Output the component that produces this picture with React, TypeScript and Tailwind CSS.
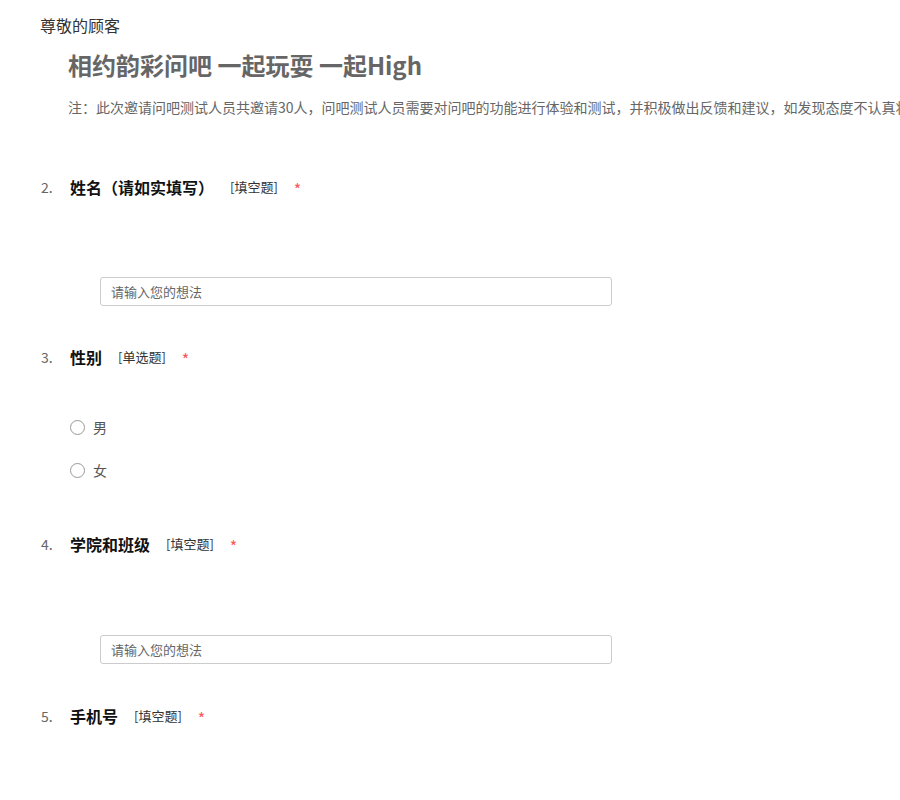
import React from 'react';

const font = { fontFamily: '"Noto Sans CJK SC", "Noto Sans", sans-serif' };

type QProps = { no: number; title: string; kind: string; className?: string };

const QuestionHead: React.FC<QProps> = ({ no, title, kind, className = '' }) => (
  <div className={`flex items-center h-[24px] leading-[24px] ${className}`}>
    <span className="w-[30px] text-[14px] text-[#666] pl-[1px]">{no}.</span>
    <span className="text-[16px] font-bold text-[#111]">{title}</span>
    <span className="ml-[16px] text-[13px] text-[#333]">[{kind}]</span>
    <span className="ml-[16px] mt-[4px] text-[16px] leading-[16px] text-[#f55]">*</span>
  </div>
);

const TextInput: React.FC<{ className?: string }> = ({ className = '' }) => (
  <div className={`ml-[60px] ${className}`}>
    <input
      type="text"
      placeholder="请输入您的想法"
      className="w-[512px] h-[29px] border border-[#ccc] rounded-[3px] px-[10px] text-[13px] text-[#333] placeholder:text-[#666] outline-none"
      style={font}
    />
  </div>
);

const Radio: React.FC<{ label: string; className?: string }> = ({ label, className = '' }) => (
  <label className={`flex items-center ml-[30px] leading-[20px] ${className}`}>
    <span className="w-[15px] h-[15px] rounded-full border border-[#999] bg-white" />
    <span className="ml-[8px] text-[14px] text-[#555]">{label}</span>
  </label>
);

export default function App() {
  return (
    <div className="w-[900px] h-[800px] overflow-hidden bg-white" style={font}>
      <div className="pl-[40px] pt-[15px]">
        <div className="text-[16px] leading-[20px] text-[#333]">尊敬的顾客</div>

        <div className="pl-[28px]">
          <h1 className="mt-[14px] text-[24px] leading-[32px] font-bold text-[#666]">相约韵彩问吧 一起玩耍 一起High</h1>
          <p className="mt-[16px] text-[14px] leading-[20px] text-[#666] whitespace-nowrap">
            注：此次邀请问吧测试人员共邀请30人，问吧测试人员需要对问吧的功能进行体验和测试，并积极做出反馈和建议，如发现态度不认真将取消测试资格。
          </p>
        </div>

        <QuestionHead no={2} title="姓名（请如实填写）" kind="填空题" className="mt-[58px]" />
        <TextInput className="mt-[78px]" />

        <QuestionHead no={3} title="性别" kind="单选题" className="mt-[39px]" />
        <Radio label="男" className="mt-[48px]" />
        <Radio label="女" className="mt-[23px]" />

        <QuestionHead no={4} title="学院和班级" kind="填空题" className="mt-[52px]" />
        <TextInput className="mt-[79px]" />

        <QuestionHead no={5} title="手机号" kind="填空题" className="mt-[40px]" />
      </div>
    </div>
  );
}
